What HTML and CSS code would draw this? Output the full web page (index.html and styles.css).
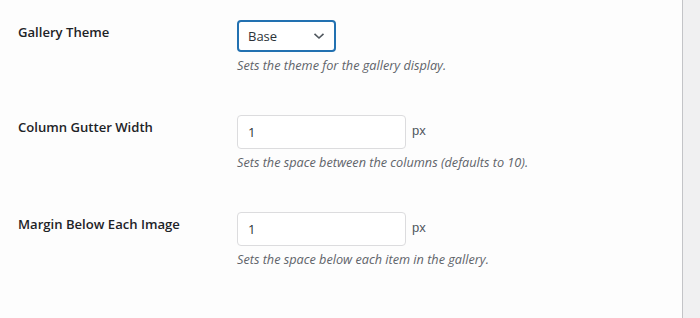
FILE: index.html
```html
<!DOCTYPE html>
<html lang="en">
<head>
    <meta charset="UTF-8">
    <title>Gallery Settings</title>
    <link rel="stylesheet" href="styles.css">
</head>
<body>
    <div class="settings">
        <div class="row">
            <div class="label">Gallery Theme</div>
            <div class="field">
                <div class="select">
                    <span>Base</span>
                    <svg width="12" height="8" viewBox="0 0 12 8"><path d="M1.5 1.8 L6 6 L10.5 1.8" fill="none" stroke="#50575e" stroke-width="1.6"/></svg>
                </div>
                <p class="desc">Sets the theme for the gallery display.</p>
            </div>
        </div>

        <div class="row">
            <div class="label">Column Gutter Width</div>
            <div class="field">
                <div class="inline">
                    <input type="text" value="1">
                    <span class="unit">px</span>
                </div>
                <p class="desc">Sets the space between the columns (defaults to 10).</p>
            </div>
        </div>

        <div class="row">
            <div class="label">Margin Below Each Image</div>
            <div class="field">
                <div class="inline">
                    <input type="text" value="1">
                    <span class="unit">px</span>
                </div>
                <p class="desc">Sets the space below each item in the gallery.</p>
            </div>
        </div>
    </div>
</body>
</html>
```

FILE: styles.css
```css
body {
    margin: 0;
    background: #f0f0f1;
    font-family: "Open Sans", "Noto Sans", sans-serif;
    color: #1d2327;
}
.settings {
    width: 683px;
    height: 318px;
    background: #fdfdfd;
    border-right: 1px solid #c3c4c7;
    padding-top: 20px;
    box-sizing: border-box;
}
.row {
    display: grid;
    grid-template-columns: 219px 1fr;
    padding-left: 18px;
    margin-bottom: 41px;
}
.label {
    font-size: 13.1px;
    font-weight: 600;
    line-height: 18px;
    padding-top: 3px;
}
.select {
    width: 99px;
    height: 32px;
    box-sizing: border-box;
    border: 2px solid #2271b1;
    border-radius: 4px;
    display: flex;
    align-items: center;
    justify-content: space-between;
    padding: 0 9px 0 9px;
    font-size: 13px;
    color: #2c3338;
    background: #fff;
}
.inline {
    display: flex;
    align-items: center;
}
.inline input {
    width: 169px;
    height: 34px;
    box-sizing: border-box;
    border: 1px solid #dcdcde;
    border-radius: 4px;
    padding: 0 10px;
    font-family: "Open Sans", "Noto Sans", sans-serif;
    font-size: 13px;
    color: #2c3338;
    background: #fff;
    margin: 0;
}
.unit {
    margin-left: 6px;
    margin-top: -4px;
    font-family: "Liberation Sans", Arial, sans-serif;
    font-size: 13px;
    color: #50575e;
}
.desc {
    margin: 4px 0 0;
    font-size: 12.7px;
    font-style: italic;
    line-height: 18px;
    color: #5f646a;
}
```
